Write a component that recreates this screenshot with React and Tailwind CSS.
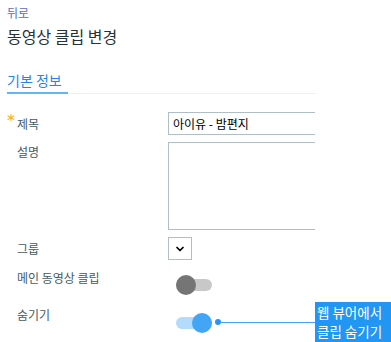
import { ChevronDown } from "lucide-react";

const font = { fontFamily: '"Noto Sans CJK KR", "Noto Sans", sans-serif' };

const Toggle = ({ on }) => (
  <div className="relative h-[20px] w-[36px]">
    <div className={`absolute left-0 top-[4px] h-[12px] w-[36px] rounded-full ${on ? "bg-[#b3dbfb]" : "bg-[#c8c8c8]"}`} />
    <div className={`absolute top-0 h-[20px] w-[20px] rounded-full ${on ? "left-[16px] bg-[#42a5f5]" : "left-0 bg-[#757575]"}`} />
  </div>
);

export default function App() {
  return (
    <div className="relative h-[342px] w-[391px] overflow-hidden bg-white" style={font}>
      <div className="pl-[7px] pt-[5px]">
        <div className="text-[12px] leading-[16px] text-[#5c6bc0]">뒤로</div>
        <h1 className="mt-[5px] text-[16px] leading-[20px] text-[#263238]">동영상 클립 변경</h1>

        <div className="mt-[24px] flex h-[24px] w-[309px] items-end border-b border-[#e3f2fd]">
          <span className="-mb-px block h-[24px] w-[61px] border-b-2 border-[#64b5f6] text-[14px] leading-[20px] text-[#1e88e5]">
            기본 정보
          </span>
        </div>

        <div className="mt-[18px] flex items-center text-[12px] leading-[16px] text-[#455a64]">
          <div className="flex w-[161px]">
            <span className="-mt-[3px] w-[10px] text-[16px] leading-[16px] text-[#ffa726]" style={{ fontFamily: '"DejaVu Sans", sans-serif' }}>*</span>
            <span>제목</span>
          </div>
          <div className="flex h-[23px] w-[147px] items-center border border-r-0 border-[#b0bec5] pl-[4px] text-[12px] text-black">
            아이유 - 밤편지
          </div>
        </div>

        <div className="mt-[7px] flex text-[12px] leading-[16px] text-[#455a64]">
          <div className="w-[161px] pl-[10px] pt-[2px]">설명</div>
          <div className="h-[88px] w-[147px] border border-r-0 border-[#b0bec5]" />
        </div>

        <div className="mt-[7px] flex items-center text-[12px] leading-[16px] text-[#455a64]">
          <div className="w-[161px] pl-[10px]">그룹</div>
          <div className="flex h-[23px] w-[24px] items-center justify-center border border-[#b0bec5]">
            <ChevronDown size={12} strokeWidth={3.5} className="text-black" />
          </div>
        </div>

        <div className="mt-[10px] flex h-[30px] text-[12px] leading-[16px] text-[#455a64]">
          <div className="w-[161px] pl-[10px]">메인 동영상 클립</div>
          <div className="pl-[8px] pt-[5px]">
            <Toggle on={false} />
          </div>
        </div>

        <div className="mt-[6px] flex text-[12px] leading-[16px] text-[#455a64]">
          <div className="w-[161px] pl-[10px] pt-[1px]">숨기기</div>
          <div className="pl-[8px] pt-[7px]">
            <Toggle on />
          </div>
        </div>
      </div>

      <div className="absolute left-[215px] top-[319px] h-[6px] w-[6px] rounded-full bg-[#2196f3]" />
      <div className="absolute left-[220px] top-[322px] h-px w-[96px] bg-[#42a5f5]" />
      <div className="absolute left-[315px] top-[302px] h-[44px] w-[80px] bg-[#2196f3] pl-[2px] pt-[1px] text-[13.5px] leading-[19px] text-white">
        <div>웹 뷰어에서</div>
        <div>클립 숨기기</div>
      </div>
    </div>
  );
}
